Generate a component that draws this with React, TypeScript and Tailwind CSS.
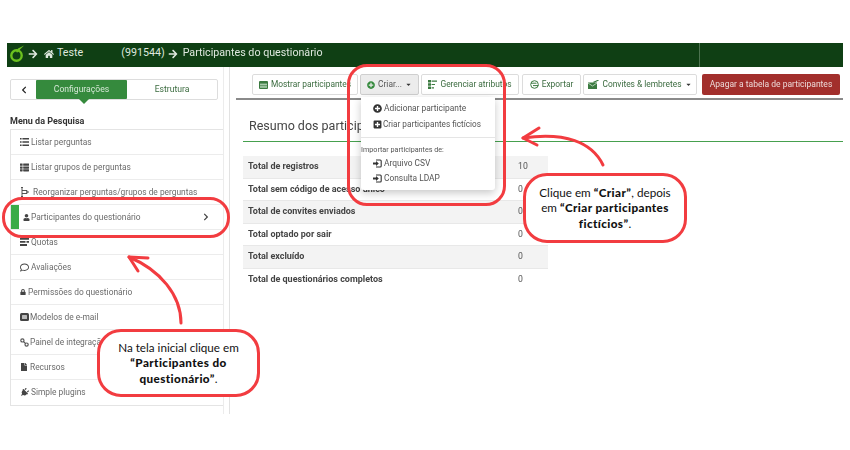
import type { ReactNode } from "react";
import {
  FaArrowRight,
  FaCaretDown,
  FaChevronLeft,
  FaChevronRight,
  FaFile,
  FaHome,
  FaLock,
  FaPlug,
  FaPlusCircle,
  FaPlusSquare,
  FaRegComment,
  FaThList,
  FaUser,
} from "react-icons/fa";

function ListIcon() {
  return (
    <svg width="9" height="8" viewBox="0 0 9 8" fill="currentColor">
      <path d="M0 0h1.6v1.6H0zM2.4 0H9v1.6H2.4zM0 3.2h1.6v1.6H0zM2.4 3.2H9v1.6H2.4zM0 6.4h1.6V8H0zM2.4 6.4H9V8H2.4z" />
    </svg>
  );
}

function ReorderIcon() {
  return (
    <svg width="9" height="10" viewBox="0 0 9 10" fill="none" stroke="currentColor" strokeWidth="0.9">
      <path d="M1 0.5h2M2 0.5v9M1 9.5h2M2 3.5h5v3H2" />
      <path d="M6 5h3" />
    </svg>
  );
}

function QuotaIcon() {
  return (
    <svg width="9" height="8" viewBox="0 0 9 8" fill="currentColor">
      <path d="M0 0h9v1.8H0zM0 3h5.5v1.8H0zM6.5 3H9v1.8H6.5zM0 6h7v2H0z" />
    </svg>
  );
}

function MailBoxIcon() {
  return (
    <svg width="9" height="8" viewBox="0 0 9 8">
      <rect width="9" height="8" rx="1.5" fill="#444" />
      <rect x="2" y="2" width="5" height="4" rx="0.5" fill="#bbb" />
    </svg>
  );
}

function ChainIcon() {
  return (
    <svg width="9" height="9" viewBox="0 0 9 9" fill="none" stroke="#555" strokeWidth="1.2">
      <circle cx="2.4" cy="2.4" r="1.6" />
      <circle cx="6.6" cy="6.6" r="1.6" />
      <path d="M3.6 3.6L5.4 5.4" />
    </svg>
  );
}

function TableAltIcon() {
  return (
    <svg width="9" height="8" viewBox="0 0 9 8">
      <rect width="9" height="8" rx="1" fill="#3b7a40" />
      <rect x="1" y="2.6" width="7" height="4.2" fill="#a9cbac" />
      <path d="M1 4.7h7" stroke="#3b7a40" strokeWidth="0.7" />
    </svg>
  );
}

function AttributesIcon() {
  return (
    <svg width="9" height="9" viewBox="0 0 9 9" fill="#3b7a40">
      <path d="M0 0h3v2.4H0zM3.6 0.6H9v1.2H3.6zM0 3.3h3v2.4H0zM3.6 3.9H7v1.2H3.6zM0 6.6h3V9H0zM3.6 7.2H6v1.2H3.6z" />
    </svg>
  );
}

function ExportIcon() {
  return (
    <svg width="9" height="9" viewBox="0 0 9 9" fill="none" stroke="#3b7a40" strokeWidth="1">
      <circle cx="4.5" cy="4.5" r="3.8" />
      <path d="M1 3.2h5.5M3 5.6h5.5" />
    </svg>
  );
}

function InviteIcon() {
  return (
    <svg width="11" height="9" viewBox="0 0 11 9">
      <rect x="0" y="2.5" width="9" height="6.5" fill="#3b7a40" />
      <path d="M0 3l4.5 3L9 3" fill="none" stroke="#cfe3d0" strokeWidth="0.8" />
      <path d="M5.5 2.4L8 1.2 10.6 0" fill="none" stroke="#3b7a40" strokeWidth="1.2" />
    </svg>
  );
}

function ImportIcon() {
  return (
    <svg width="9" height="9" viewBox="0 0 9 9" fill="none" stroke="#333">
      <path d="M3 1h4.2a1 1 0 0 1 1 1v5a1 1 0 0 1-1 1H3" strokeWidth="1.1" />
      <path d="M0 3.5h3V2l2.8 2.5L3 7V5.5H0z" fill="#333" stroke="none" />
    </svg>
  );
}

const menuItems: { icon: ReactNode; label: string; gap: string }[] = [
  { icon: <ListIcon />, label: "Listar perguntas", gap: "gap-[2px]" },
  { icon: <FaThList size={9} />, label: "Listar grupos de perguntas", gap: "gap-[2px]" },
  { icon: <ReorderIcon />, label: "Reorganizar perguntas/grupos de perguntas", gap: "gap-[4px]" },
  { icon: <FaUser size={7} />, label: "Participantes do questionário", gap: "gap-[1px]" },
  { icon: <QuotaIcon />, label: "Quotas", gap: "gap-[2px]" },
  { icon: <FaRegComment size={9} />, label: "Avaliações", gap: "gap-[2px]" },
  { icon: <FaLock size={6} />, label: "Permissões do questionário", gap: "gap-[2px]" },
  { icon: <MailBoxIcon />, label: "Modelos de e-mail", gap: "gap-[1px]" },
  { icon: <ChainIcon />, label: "Painel de integração", gap: "gap-[1px]" },
  { icon: <FaFile size={8} />, label: "Recursos", gap: "gap-[2px]" },
  { icon: <FaPlug size={9} className="rotate-45" />, label: "Simple plugins", gap: "gap-[2px]" },
];

const stats = [
  ["Total de registros", "10"],
  ["Total sem código de acesso único", "0"],
  ["Total de convites enviados", "0"],
  ["Total optado por sair", "0"],
  ["Total excluído", "0"],
  ["Total de questionários completos", "0"],
];

function ToolButton({ icon, label, caret, width }: { icon: ReactNode; label: string; caret?: boolean; width: string }) {
  return (
    <button
      type="button"
      className={`flex h-[21px] ${width} shrink-0 items-center justify-center gap-[3px] rounded-[2px] border border-[#dcdcdc] bg-white text-[8.4px] text-[#3b6b3f]`}
    >
      {icon}
      {label}
      {caret && <FaCaretDown size={7} className="text-[#333]" />}
    </button>
  );
}

function Logo() {
  return (
    <svg width="16" height="18" viewBox="0 0 16 18" className="shrink-0">
      <circle cx="7.5" cy="10.5" r="5.2" fill="none" stroke="#6cc11f" strokeWidth="2.4" />
      <path d="M7 7 L9 3.5 L15 0.5 L10.5 5 L8.5 7.5 Z" fill="#6cc11f" />
    </svg>
  );
}

export default function App() {
  return (
    <div className="relative h-[450px] w-[850px] overflow-hidden bg-white font-['Roboto',sans-serif]">
      <div className="flex h-full flex-col px-[7px] pt-[43px] pb-[36px] blur-[0.35px]">
        {/* Top bar */}
        <div className="flex h-[24px] shrink-0 items-center bg-[#0f3f14] pl-[2px] text-[10.7px] text-[#dfe8df]">
          <div className="flex items-center pb-[3px]">
            <Logo />
            <FaArrowRight size={10} className="ml-[3px]" />
            <FaHome size={10} className="ml-[6px]" />
            <span className="ml-[3px]">Teste</span>
            <span className="ml-[38px]">(991544)</span>
            <FaArrowRight size={10} className="ml-[3px]" />
            <span className="ml-[5px]">Participantes do questionário</span>
          </div>
          <div className="ml-auto mr-[143px] h-full w-px bg-[#4d7350]" />
        </div>

        <div className="flex min-h-0 flex-1">
          {/* Sidebar */}
          <aside className="w-[217px] shrink-0 border-r border-[#ececec] pl-[3px] pt-[12px]">
            <div className="relative flex h-[21px] w-[208px] rounded-[2px] border border-[#dddddd] text-[8.6px]">
              <div className="flex w-[25px] items-center justify-center text-[#222]">
                <FaChevronLeft size={8} />
              </div>
              <div className="flex w-[91px] items-center justify-center rounded-[1px] bg-[#358a3d] text-[#d6e8d7]">
                Configurações
              </div>
              <div className="flex flex-1 items-center justify-center text-[#3b6b3f]">Estrutura</div>
              <div className="absolute left-[68px] top-[19px] h-0 w-0 border-x-[5px] border-t-[5px] border-x-transparent border-t-[#358a3d]" />
            </div>

            <h2 className="mt-[15px] text-[9px] font-bold leading-[12px] text-[#333]">Menu da Pesquisa</h2>

            <ul className="mt-[2px] w-[213px] border-y border-l border-[#e4e4e4] text-[8.4px] text-[#6b6b6b]">
              {menuItems.map((item, i) => {
                const active = i === 3;
                return (
                  <li
                    key={item.label}
                    className={`flex h-[25px] items-center border-b border-[#ececec] last:border-b-0 ${item.gap} ${active ? "" : "pl-[9px]"}`}
                  >
                    {active && <div className="mr-[3px] h-full w-[8px] bg-[#3aab47]" />}
                    <span className="flex justify-center text-[#444]">{item.icon}</span>
                    <span className="truncate">{item.label}</span>
                    {active && <FaChevronRight size={8} className="ml-auto mr-[13px] text-[#444]" />}
                  </li>
                );
              })}
            </ul>
          </aside>

          <div className="h-full w-[6px] shrink-0 border-r border-[#e2e2e2]" />

          {/* Main */}
          <main className="min-w-0 flex-1 pl-[6px]">
            <div className="flex h-[33px] items-end border-b-[2px] border-[#8a8a8a] pb-[3px] pl-[16px]">
              <div className="flex items-center gap-[2px]">
                <ToolButton width="w-[106px]" icon={<TableAltIcon />} label="Mostrar participantes" />
                <button
                  type="button"
                  className="flex h-[21px] w-[59px] shrink-0 items-center justify-center gap-[3px] rounded-[2px] border border-[#cfcfcf] bg-[#ececec] text-[8.4px] text-[#555]"
                >
                  <FaPlusCircle size={8} className="text-[#358a3d]" />
                  Criar...
                  <FaCaretDown size={7} className="text-[#333]" />
                </button>
                <ToolButton width="w-[98px]" icon={<AttributesIcon />} label="Gerenciar atributos" />
                <ToolButton width="w-[59px] ml-[1px]" icon={<ExportIcon />} label="Exportar" />
                <ToolButton width="w-[114px]" icon={<InviteIcon />} label="Convites & lembretes" caret />
                <button
                  type="button"
                  className="ml-[3px] flex h-[21px] w-[138px] shrink-0 items-center justify-center rounded-[2px] bg-[#a22f2c] text-[8.5px] text-[#ecd9d8]"
                >
                  Apagar a tabela de participantes
                </button>
              </div>
            </div>

            <div className="ml-[7px] mt-[17px] flex h-[25px] items-center border-b border-[#46a04e] pb-[5px] pl-[6px] text-[12.5px] text-[#444]">
              Resumo dos participantes
            </div>

            <div className="ml-[7px] mt-[14px] w-[305px] text-[9px] text-[#444]">
              {stats.map(([label, value], i) => (
                <div key={label} className={`flex h-[22.5px] items-center border-b border-[#e8e8e8] last:border-b-0 ${i % 2 === 0 ? "bg-[#f3f3f3]" : "bg-white"}`}>
                  <span className="flex-1 pl-[5px] font-bold">{label}</span>
                  <span className="w-[30px] text-[8.7px] text-[#555]">{value}</span>
                </div>
              ))}
            </div>
          </main>
        </div>
      </div>

      {/* Dropdown */}
      <div className="absolute left-[361px] top-[97px] h-[93px] w-[134px] rounded-b-[3px] bg-white pt-[3px] text-[8.4px] text-[#555] shadow-[0_3px_8px_rgba(0,0,0,0.22)]">
        <div className="flex h-[16px] items-center gap-[2px] pl-[12px]">
          <FaPlusCircle size={9} className="text-[#333]" />
          Adicionar participante
        </div>
        <div className="flex h-[16px] items-center gap-[1px] pl-[12px] text-[8.2px]">
          <FaPlusSquare size={9} className="text-[#333]" />
          Criar participantes fictícios
        </div>
        <div className="mt-[5px] border-t border-[#e5e5e5] pt-[7px] text-[7.2px] leading-[10px]">Importar participantes de:</div>
        <div className="mt-[1px] flex h-[15px] items-center gap-[2px] pl-[12px]">
          <ImportIcon />
          Arquivo CSV
        </div>
        <div className="flex h-[15.5px] items-center gap-[2px] pl-[12px]">
          <ImportIcon />
          Consulta LDAP
        </div>
      </div>

      {/* Annotations */}
      <div className="absolute left-[347px] top-[64px] h-[142px] w-[159px] rounded-[20px] border-[3px] border-[#f23c40]" />
      <div className="absolute left-[2px] top-[197px] h-[41px] w-[228px] rounded-[20px] border-[3px] border-[#f23c40]" />

      <svg className="absolute left-0 top-0" width="850" height="450" fill="none" stroke="#f23c40" strokeWidth="3" strokeLinecap="round" strokeLinejoin="round">
        <path d="M181 323 C181 295 160 270 129 257" />
        <path d="M148 258 L129 257 L138 271" />
        <path d="M603 165 C592 142 565 132 523 138" />
        <path d="M539 128 L523 138 L537 145" />
      </svg>

      <div className="absolute left-[97px] top-[329px] flex h-[68px] w-[163px] flex-col items-center justify-center rounded-[24px] border-[3px] border-[#f23c40] bg-white font-['Lato',sans-serif] text-[11.7px] leading-[15.5px] text-[#111]">
        <span>Na tela inicial clique em</span>
        <b className="font-black tracking-[0.4px]">“Participantes do</b>
        <span>
          <b className="font-black tracking-[0.4px]">questionário”</b>.
        </span>
      </div>

      <div className="absolute left-[523px] top-[173px] flex h-[70px] w-[164px] flex-col items-center justify-center rounded-[24px] border-[3px] border-[#f23c40] bg-white font-['Lato',sans-serif] text-[11.7px] leading-[15.5px] text-[#111]">
        <span>
          Clique em <b className="font-black tracking-[0.4px]">“Criar”</b>, depois
        </span>
        <span>
          em <b className="font-black tracking-[0.4px]">“Criar participantes</b>
        </span>
        <span>
          <b className="font-black tracking-[0.4px]">fictícios”</b>.
        </span>
      </div>
    </div>
  );
}
